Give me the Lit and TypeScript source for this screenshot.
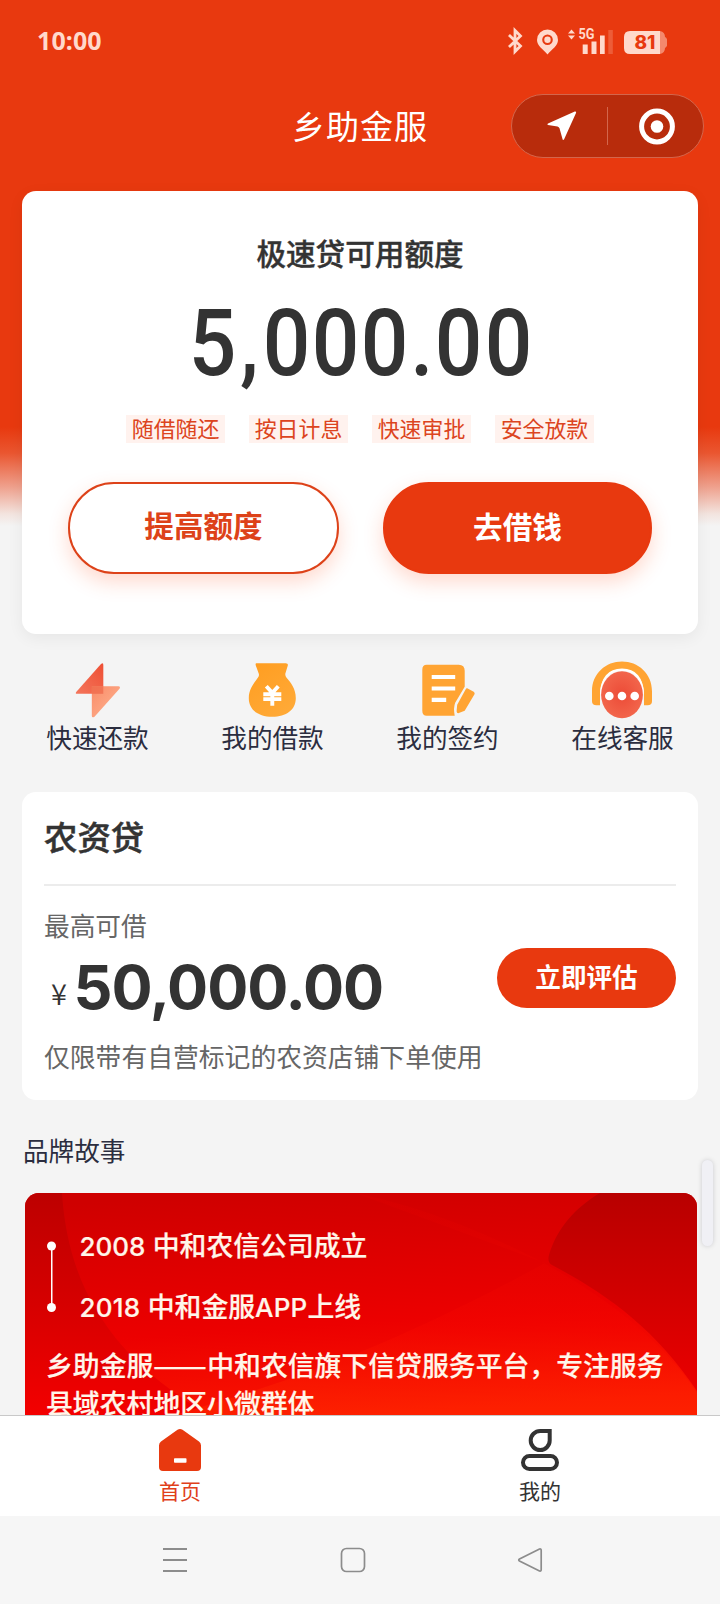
import { LitElement, html, css, svg } from "lit";
import { customElement } from "lit/decorators.js";

const bolt = svg`
  <defs>
    <linearGradient id="b1" x1="1" y1="0" x2="0" y2="1"><stop offset="0" stop-color="#ee4f34"/><stop offset="1" stop-color="#f4765c"/></linearGradient>
    <linearGradient id="b2" x1="0" y1="0" x2="1" y2="1"><stop offset="0" stop-color="#f98c69"/><stop offset="1" stop-color="#ffb592"/></linearGradient>
  </defs>
  <g transform="translate(.5 .3)">
  <path d="M38.5 4.800Q40.800 2.600 40.800 5.500V34.500H14.500Q12.600 34.500 13.700 32.600Z" fill="url(#b1)"/>
  <path d="M29.300 27H55.800Q58.400 27.200 57 29.400L32 57.500Q29.300 59 29.300 56.500Z" fill="url(#b2)"/>
  <path d="M29.300 27H40.800V34.500H29.300Z" fill="#ee6547" opacity=".7"/>
  </g>`;

const bag = svg`
  <defs><linearGradient id="g1" x1="0" y1="0" x2=".6" y2="1"><stop offset="0" stop-color="#ff9d20"/><stop offset="1" stop-color="#ffa936"/></linearGradient></defs>
  <g transform="translate(-1.200 .8)">
  <path d="M20.500 3.400H50Q52.600 3.500 52 5.800L49.500 14Q49.300 16 50.600 17.800C55 23 60 29 60 38.500C60 50 50.500 57 36.500 57C22.500 57 13 50 13 38.500C13 29 18.500 23 22.200 17.800Q23.600 16 23 14L20 5.600Q19.400 3.700 20.500 3.400Z" fill="url(#g1)"/>
  <path d="M30.500 26.500L36.500 33L42.500 26.500M27.500 34.500H45.500M27.500 39.300H45.500M36.500 33V46" stroke="#fff" stroke-width="3.900" fill="none"/>
  </g>`;

const sign = svg`
  <g transform="translate(-2.300 .8)">
  <path d="M17 5H49Q55 5 55 11V27L45.500 43Q43.500 48 45 56H17Q12.600 56 12.600 51V10Q12.600 5 17 5Z" fill="#ffa433"/>
  <path d="M22 17.200H45.500M22 28.700H45.500M22 40H36.500" stroke="#fff" stroke-width="4.200" fill="none"/>
  <path d="M57.500 28.500L64 32Q65.500 33 64.800 34.500L55 51L48.500 53.500Q47 53.500 46.900 51.500L47.500 45L56 29.500Q56.700 28.200 57.500 28.500Z" fill="#ffa433"/>
  </g>`;

const headset = svg`
  <defs><radialGradient id="h1"><stop offset="0" stop-color="#ec4b37"/><stop offset="1" stop-color="#f2654b"/></radialGradient></defs>
  <g transform="translate(-1 1.300)">
  <path d="M6 41V31C6 13 20 1.200 36 1.200S66 13 66 31V41Q66 45 61.500 45H58V30C56 17 48 9 36 9S16 17 14 30V45H10.500Q6 45 6 41Z" fill="#ffa433"/>
  <path d="M15.500 34C15.500 18 23 9.500 36 9.500S56.500 18 56.500 34" stroke="#fff" stroke-width="2.500" fill="none"/>
  <ellipse cx="36" cy="34.500" rx="20.900" ry="23.500" fill="url(#h1)"/>
  <g fill="#fff"><circle cx="23.300" cy="35.700" r="4.300"/><circle cx="36" cy="35.700" r="4.300"/><circle cx="48.700" cy="35.700" r="4.300"/></g>
  </g>`;

@customElement("app-root")
export class AppRoot extends LitElement {
  static styles = css`
    :host { display: block; width: 720px; height: 1604px; overflow: hidden; font-family: "Noto Sans CJK SC", sans-serif; color: #333; }
    * { box-sizing: border-box; }
    svg { display: block; flex: none; }
    .screen { position: relative; height: 1604px; display: flex; flex-direction: column; background: linear-gradient(#e8390f 0, #e8390f 427px, #ea5630 453px, #efa390 488px, #f3e4df 514px, #f4f4f4 526px); }
    .status { height: 82px; flex: none; padding: 0 53px 0 37px; display: flex; align-items: center; justify-content: space-between; color: #ffd9cc; }
    .clock { font: 700 25px/30px "Noto Sans", sans-serif; margin-top: -2px; letter-spacing: .1px; }
    .head { height: 109px; flex: none; display: grid; grid-template-columns: 292px 1fr 193px; padding-right: 16px; align-items: start; }
    .name { grid-column: 2; margin-top: 19px; font-size: 33px; line-height: 48px; letter-spacing: 1px; color: #fff; }
    .capsule { height: 64px; margin-top: 12px; border: 1px solid #d3664c; border-radius: 32px; background: #b82c0c; display: flex; align-items: center; justify-content: center; }
    .card { margin: 0 22px; border-radius: 14px; background: #fff; flex: none; }
    .quota { height: 443px; display: flex; flex-direction: column; align-items: center; box-shadow: 0 4px 16px rgba(0,0,0,.06); }
    .qtitle { margin-top: 41px; font-size: 29.600px; line-height: 42px; font-weight: 500; -webkit-text-stroke: .4px #333; }
    .amount { margin-top: 17px; height: 106px; display: flex; justify-content: center; font: 500 93px/106px Roboto, sans-serif; color: #333; }
    .dg, .pt { width: 49.300px; display: flex; justify-content: center; }
    .pt { width: 24.700px; }
    .glyph { transform: scaleX(.9); }
    .tags { margin-top: 18px; display: flex; gap: 24.600px; }
    .tag { width: 98.400px; height: 28px; font-size: 21.900px; line-height: 26px; text-align: center; background: #fff2ee; color: #dc4420; white-space: nowrap; }
    .btns { margin-top: 39px; width: 584px; display: flex; justify-content: space-between; }
    .btn { width: 271px; height: 92px; border-radius: 46px; border: 2px solid #dd4219; font-size: 29.600px; line-height: 81px; font-weight: 700; text-align: center; color: #dd4219; background: #fff; box-shadow: 0 8px 20px rgba(255,80,30,.22); }
    .solid { width: 269px; background: #e8390f; border-color: #e8390f; color: #fff; line-height: 83px; }
    .quick { height: 158px; padding: 25px 10px 0; display: grid; grid-template-columns: repeat(4, 175px); flex: none; }
    .item { display: flex; flex-direction: column; align-items: center; }
    .label { font-size: 25.600px; line-height: 36px; color: #2b2d3f; }
    .farm { height: 308px; padding: 0 22px; }
    .ftitle { height: 94px; padding-top: 20px; font-size: 33.400px; line-height: 48px; font-weight: 500; border-bottom: 2px solid #ececec; -webkit-text-stroke: .5px #333; }
    .frow { display: flex; justify-content: space-between; }
    .cap { margin-top: 21px; font-size: 25.700px; line-height: 36px; color: #666; }
    .money { height: 84px; padding: 3px 0 0 7px; display: flex; align-items: baseline; }
    .yen { position: relative; top: -4px; font-size: 29px; width: 22.500px; font-weight: 350; }
    .big { font: 700 61px/82px Inter, sans-serif; letter-spacing: -1.100px; }
    .eval { margin-top: 62px; width: 179px; height: 60px; border-radius: 30px; background: #e8390f; color: #fff; font-size: 25.600px; font-weight: 700; line-height: 56px; text-align: center; }
    .note { margin-top: 11px; font-size: 25.800px; line-height: 36px; color: #666; }
    .story { margin: 32px 22px 0; padding-left: 1px; font-size: 25.600px; line-height: 36px; color: #2b2d3f; height: 61px; flex: none; }
    .banner { position: relative; margin: 0 23px 0 25px; height: 222px; overflow: hidden; border-radius: 14px 14px 0 0; flex: none; color: #fff6ea; font-size: 26.850px; font-weight: 500; -webkit-text-stroke: .2px #fff6ea; }
    .art { position: absolute; left: 0; top: 0; }
    .content { position: relative; padding: 32px 0 0 21px; }
    .line { display: flex; height: 122px; padding-left: 1px; }
    .years { padding: 1px 0 0 23.500px; }
    .year { height: 61.300px; line-height: 38px; white-space: pre; }
    .num { font-family: Inter, sans-serif; font-size: 26px; word-spacing: .3px; }
    .wide { letter-spacing: .2px; }
    .para { margin-top: -1px; line-height: 38.300px; white-space: nowrap; }
    .dash { display: inline-block; width: 53.800px; transform: scaleX(1.19); transform-origin: 0 50%; }
    .tabs { height: 101px; border-top: 1px solid #c9c9c9; background: #fff; display: grid; grid-template-columns: 1fr 1fr; flex: none; }
    .tab { padding-top: 12px; display: flex; flex-direction: column; align-items: center; font-size: 21px; line-height: 30px; }
    .tab span { margin-top: 1px; }
    .on { color: #e0401a; }
    .sys { height: 88px; background: #f6f6f6; flex: none; padding: 0 177px 0 162px; display: flex; align-items: center; justify-content: space-between; }
    .thumb { position: absolute; left: 702px; top: 1160px; width: 11px; height: 86px; border-radius: 6px; background: #f0f0f5; box-shadow: 0 0 5px rgba(0,0,30,.17); }
  `;

  render() {
    const items = [
      { n: "快速还款", i: bolt },
      { n: "我的借款", i: bag },
      { n: "我的签约", i: sign },
      { n: "在线客服", i: headset },
    ];
    return html`<div class="screen">
      <div class="status">
        <div class="clock">10:00</div>
        <svg width="160" height="28" viewBox="0 0 160 28" fill="#ffd9cc">
          <path d="M2 8L13.500 19L8 24.500V3.500L13.500 9L2 20" fill="none" stroke="#ffd9cc" stroke-width="2.800"/>
          <path fill-rule="evenodd" d="M40.500 2.500A10.500 10.500 0 0 0 30 13C30 19 36 22 40.500 27.500C45 22 51 19 51 13A10.500 10.500 0 0 0 40.500 2.500ZM40.500 7.500a5.300 5.300 0 1 1 0 10.600a5.300 5.300 0 1 1 0-10.600Z"/>
          <circle cx="40.500" cy="12.800" r="3.200"/>
          <path d="M61 6.500L64.500 2.500L68 6.500ZM61 8.500H68L64.500 12.500Z"/>
          <text x="71.500" y="12.300" font-family="Roboto" font-weight="700" font-size="14" textLength="16" lengthAdjust="spacingAndGlyphs">5G</text>
          <path d="M75.700 17.500h5v9.500h-5zM84.500 14.500h5v12.500h-5zM93 8.500h4.700v18.500h-4.700z"/>
          <path d="M101.300 3h4.500v24h-4.500z" opacity=".22"/>
          <path d="M123 4H153V27H123Q117 27 117 21V10Q117 4 123 4Z"/>
          <path d="M153 4Q158 5 158 10Q160.500 11 160.500 15.500T158 21Q158 26 153 27Z" opacity=".5"/>
          <text x="127.500" y="22.300" font-family="Inter" font-weight="800" font-size="18.500" fill="#e8390f" textLength="21" lengthAdjust="spacingAndGlyphs">81</text>
        </svg>
      </div>
      <div class="head">
        <div class="name">乡助金服</div>
        <div class="capsule">
          <svg width="191" height="62" viewBox="512 95 191 62">
            <path d="M548 123.600L574.800 111.500Q576.600 111 576 113L564 139.500Q562.800 140.600 562.500 139L559.500 128.300Q559 127 557.500 126.600L548 125Q546.600 124.400 548 123.600Z" fill="#fff"/>
            <path d="M607.500 107V145" stroke="#d3664c"/>
            <circle cx="657" cy="126.500" r="15.400" fill="none" stroke="#fff" stroke-width="5"/>
            <circle cx="657" cy="126.500" r="6.300" fill="#fff"/>
          </svg>
        </div>
      </div>
      <div class="card quota">
        <div class="qtitle">极速贷可用额度</div>
        <div class="amount">${[..."5,000.00"].map((c) => html`<span class=${/\d/.test(c) ? "dg" : "pt"}><span class="glyph">${c}</span></span>`)}</div>
        <div class="tags">${["随借随还", "按日计息", "快速审批", "安全放款"].map((t) => html`<div class="tag">${t}</div>`)}</div>
        <div class="btns"><div class="btn">提高额度</div><div class="btn solid">去借钱</div></div>
      </div>
      <div class="quick">${items.map((q) => html`<div class="item">
        <svg width="72" height="60" viewBox="0 0 72 60">${q.i}</svg><div class="label">${q.n}</div></div>`)}</div>
      <div class="card farm">
        <div class="ftitle">农资贷</div>
        <div class="frow">
          <div>
            <div class="cap">最高可借</div>
            <div class="money"><span class="yen">¥</span><span class="big">50,000.00</span></div>
          </div>
          <div class="eval">立即评估</div>
        </div>
        <div class="note">仅限带有自营标记的农资店铺下单使用</div>
      </div>
      <div class="story">品牌故事</div>
      <div class="banner">
        <svg class="art" width="672" height="222" viewBox="0 0 672 222">
          <defs>
            <linearGradient id="a" x1=".3" y1="0" x2=".5" y2="1"><stop offset="0" stop-color="#cf0000"/><stop offset=".6" stop-color="#ec0000"/><stop offset="1" stop-color="#fb1500"/></linearGradient>
            <linearGradient id="l" x1="0" y1="0" x2="0" y2="1"><stop offset="0" stop-color="#bd0000"/><stop offset=".5" stop-color="#d60000"/><stop offset="1" stop-color="#f30000"/></linearGradient>
            <linearGradient id="r" x1="0" y1="0" x2="0" y2="1"><stop offset="0" stop-color="#b80000"/><stop offset="1" stop-color="#ea0000"/></linearGradient>
            <linearGradient id="o" x1="0" y1="0" x2="0" y2="1"><stop offset="0" stop-color="#d80000"/><stop offset=".6" stop-color="#f40500"/><stop offset="1" stop-color="#ff2a00"/></linearGradient>
          </defs>
          <rect width="672" height="222" fill="url(#a)"/>
          <path d="M0 0H37C42 80 75 160 185 222H0Z" fill="url(#l)"/>
          <path d="M330 0C430 20 600 90 672 200V222H150C200 205 320 180 520 70Z" fill="url(#o)" opacity=".55"/>
          <path d="M575 0H672V198C630 135 580 100 527 72Q522 69 524 62C532 35 550 15 575 0Z" fill="url(#r)"/>
        </svg>
        <div class="content">
          <div class="line">
            <svg width="9" height="90" viewBox="0 0 9 90" fill="#fff"><path d="M4 20H5.500V80H4Z"/><circle cx="4.500" cy="21" r="4.500"/><circle cx="4.500" cy="82.500" r="4.500"/></svg>
            <div class="years">
              <div class="year"><span class="num">2008 </span>中和农信公司成立</div>
              <div class="year"><span class="num wide">2018 </span>中和金服<span class="num wide">APP</span>上线</div>
            </div>
          </div>
          <div class="para">乡助金服<span class="dash">——</span>中和农信旗下信贷服务平台，专注服务<br>县域农村地区小微群体</div>
        </div>
      </div>
      <div class="tabs">
        <div class="tab on">
          <svg width="42" height="46" viewBox="0 1 42 46"><path d="M18.500 2.800Q21 1 23.500 2.800L40 14.500Q42 16 42 18.500V40Q42 44 38 44H4Q0 44 0 40V18.500Q0 16 2 14.500Z" fill="#e8390f"/><rect x="15" y="31.200" width="12.500" height="4.500" rx=".8" fill="#fff"/></svg>
          <span>首页</span>
        </div>
        <div class="tab">
          <svg width="42" height="46" viewBox="0 0 42 46" fill="none" stroke="#333" stroke-width="4"><path d="M21.200 3H30.700V12.500A9.500 9.500 0 1 1 21.200 3Z"/><rect x="4" y="28" width="34" height="13" rx="6.500"/></svg>
          <span>我的</span>
        </div>
      </div>
      <div class="sys">
        <svg width="26" height="26" viewBox="0 0 26 26" stroke="#8c8c8c" stroke-width="2"><path d="M1 2H25M1 13H25M1 24H25"/></svg>
        <svg width="26" height="26" viewBox="0 0 26 26" fill="none" stroke="#8c8c8c" stroke-width="1.700"><rect x="1.500" y="1.500" width="23" height="23" rx="5"/></svg>
        <svg width="26" height="26" viewBox="0 0 26 26" fill="none" stroke="#8c8c8c" stroke-width="1.700"><path d="M22.500 2Q24.200 1.500 24.200 3.500V22.500Q24.200 24.500 22.500 24L2.500 14Q1 13 2.500 12Z"/></svg>
      </div>
      <div class="thumb"></div>
    </div>`;
  }
}
